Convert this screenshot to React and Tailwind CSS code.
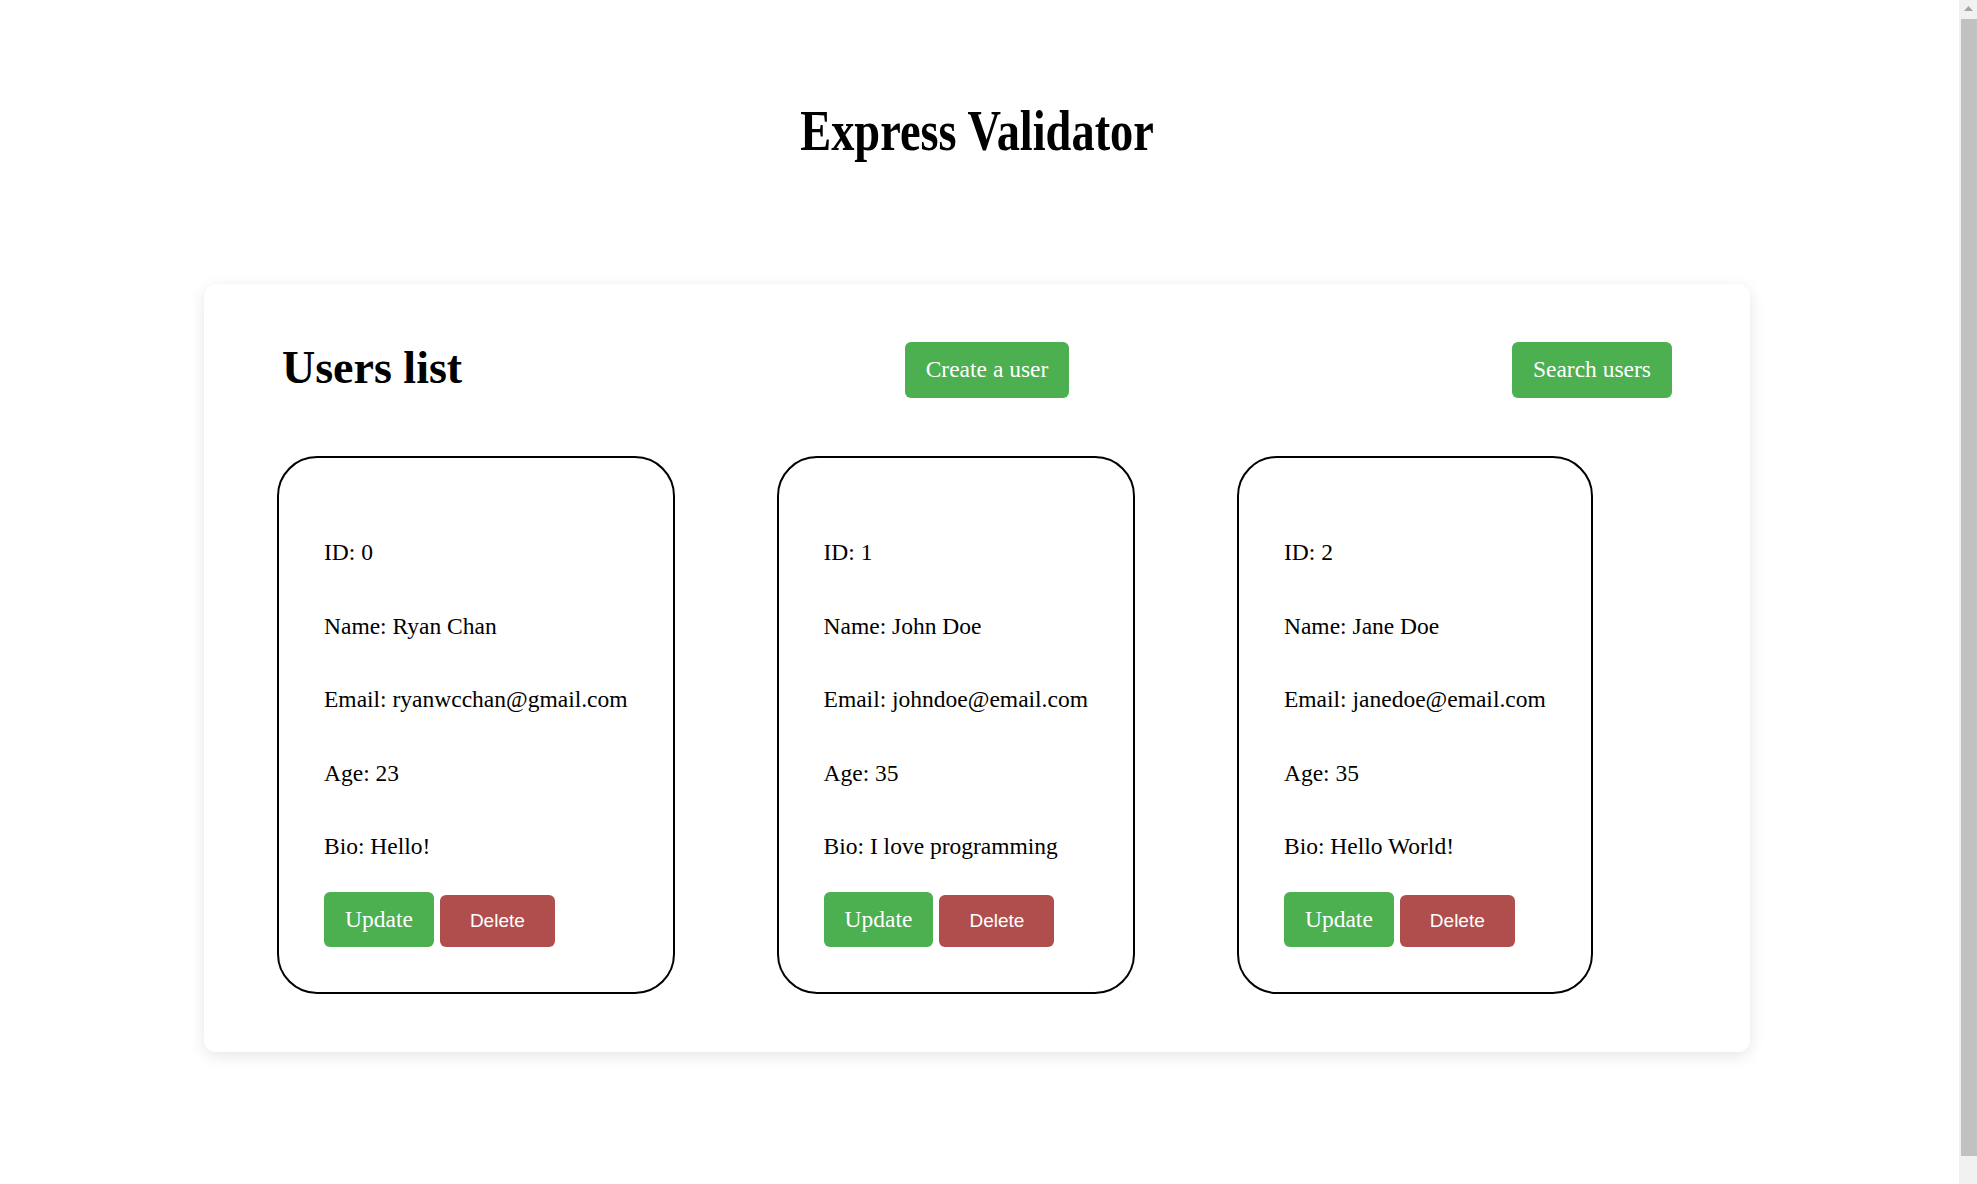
import React from 'react';

const users = [
  { id: 0, name: 'Ryan Chan', email: 'ryanwcchan@gmail.com', age: 23, bio: 'Hello!' },
  { id: 1, name: 'John Doe', email: 'johndoe@email.com', age: 35, bio: 'I love programming' },
  { id: 2, name: 'Jane Doe', email: 'janedoe@email.com', age: 35, bio: 'Hello World!' }
];

function UserCard({ user }) {
  const rows = [
    `ID: ${user.id}`,
    `Name: ${user.name}`,
    `Email: ${user.email}`,
    `Age: ${user.age}`,
    `Bio: ${user.bio}`
  ];

  return (
    <div className="border-2 border-black rounded-[40px] px-[45px] pt-[80px] pb-[45px] flex flex-col shrink-0">
      <div className="flex flex-col gap-[45.5px]">
        {rows.map(r => (
          <p key={r} className="text-[23.5px] leading-[28px] whitespace-nowrap">{r}</p>
        ))}
      </div>
      <div className="flex items-end gap-[6px] mt-[32px]">
        <button className="h-[55px] px-[21px] flex items-center bg-[#4caf50] text-white text-[23.5px] rounded-[6px]">
          Update
        </button>
        <button className="h-[52px] px-[30px] flex items-center bg-[#b04e4e] text-white text-[19px] rounded-[6px] font-['Liberation_Sans',Arial,sans-serif]">
          Delete
        </button>
      </div>
    </div>
  );
}

// window scrollbar as seen in the screenshot
function Scrollbar() {
  return (
    <div className="fixed top-0 right-0 w-[18px] h-[1184px] bg-[#f1f1f1] flex flex-col">
      <div className="h-[17px] flex items-center justify-center">
        <svg width="9" height="5" viewBox="0 0 9 5">
          <path d="M4.5 0 L9 5 L0 5 Z" fill="#a3a3a3" />
        </svg>
      </div>
      <div className="ml-[2px] h-[1137px] mt-[2px] bg-[#c1c1c1]" />
    </div>
  );
}

export default function App() {
  return (
    <div className="min-h-[1200px] bg-white text-black font-['Liberation_Serif','Times_New_Roman',serif] pt-[98px] pb-[148px] pr-[23px]">
      <div className="flex justify-center h-[66px]">
        <h1 className="inline-block text-[58px] leading-[66px] font-bold scale-x-[0.8] whitespace-nowrap">
          Express Validator
        </h1>
      </div>

      <div className="w-[1546px] mx-auto mt-[120px] bg-white rounded-xl shadow-[0_4px_16px_rgba(0,0,0,0.1)] pl-[73px] pr-[78px] py-[58px]">
        <div className="flex justify-between items-center h-[56px] pl-[5px]">
          <h2 className="text-[46px] leading-[52px] font-bold pb-[4px]">Users list</h2>
          <button className="h-[56px] px-[21px] flex items-center bg-[#4caf50] text-white text-[23.5px] rounded-[6px]">
            Create a user
          </button>
          <button className="h-[56px] px-[21px] flex items-center bg-[#4caf50] text-white text-[23.5px] rounded-[6px]">
            Search users
          </button>
        </div>

        <div className="flex gap-[102px] mt-[58px]">
          {users.map(u => (
            <UserCard key={u.id} user={u} />
          ))}
        </div>
      </div>

      <Scrollbar />
    </div>
  );
}
